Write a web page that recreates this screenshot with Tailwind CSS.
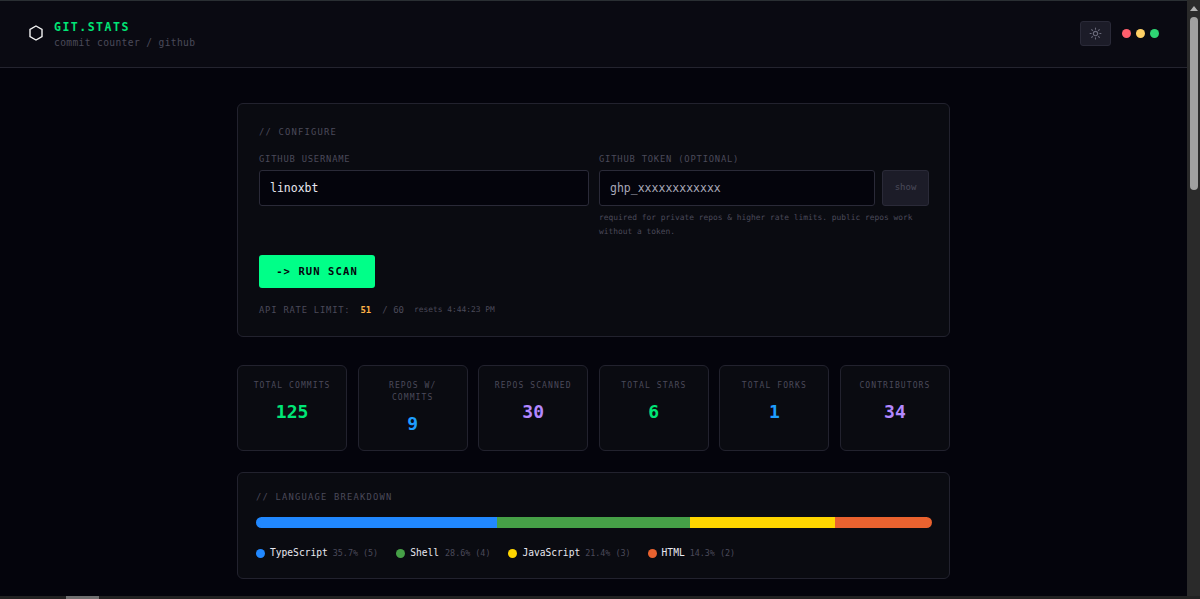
<!DOCTYPE html>
<html lang="en">
<head>
    <meta charset="UTF-8">
    <meta name="viewport" content="width=device-width, initial-scale=1.0">
    <title>git.stats</title>
    <script src="https://cdn.jsdelivr.net/npm/@tailwindcss/browser@4"></script>
</head>
<body class="h-[599px] overflow-hidden bg-[#04040c] font-['DejaVu_Sans_Mono',monospace] text-[#e6e6f0]">
<div class="flex h-[599px] flex-col overflow-hidden">
    <div class="flex min-h-0 flex-1">
        <div class="min-w-0 flex-1 overflow-hidden border-t border-[#2a2f33]">
            <header class="flex h-[66px] items-center justify-between border-b border-[#24242f] bg-[#0a0a12] pl-[29px] pr-[28px] box-content">
                <div class="flex items-center gap-[11px]">
                    <svg class="mt-[-2px] h-[16px] w-[14px]" viewBox="0 0 14 16" fill="none" stroke="#f2f2f2" stroke-width="1.4"><path d="M7 1 L13 4.5 V11.5 L7 15 L1 11.5 V4.5 Z"/></svg>
                    <div class="mt-[-1px]">
                        <div class="text-[11.5px] leading-[16px] font-bold tracking-[1.5px] text-[#00e676]">GIT.STATS</div>
                        <div class="mt-[1px] text-[9.6px] leading-[13px] tracking-[0.37px] text-[#4a4a5a]">commit counter / github</div>
                    </div>
                </div>
                <div class="mt-[-1px] flex items-center gap-[11px]">
                    <button class="flex h-[25px] w-[31px] items-center justify-center rounded-[3px] border border-[#2a2a38] bg-[#1c1c28]">
                        <svg class="h-[13px] w-[13px]" viewBox="0 0 24 24" fill="none" stroke="#6a6a7a" stroke-width="2" stroke-linecap="round"><circle cx="12" cy="12" r="4"/><path d="M12 2v2M12 20v2M4.93 4.93l1.41 1.41M17.66 17.66l1.41 1.41M2 12h2M20 12h2M6.34 17.66l-1.41 1.41M19.07 4.93l-1.41 1.41"/></svg>
                    </button>
                    <div class="flex items-center gap-[5px]">
                        <span class="h-[9px] w-[9px] rounded-full bg-[#ff5f6d]"></span>
                        <span class="h-[9px] w-[9px] rounded-full bg-[#ffd166]"></span>
                        <span class="h-[9px] w-[9px] rounded-full bg-[#2ed573]"></span>
                    </div>
                </div>
            </header>

            <main class="mx-auto w-[713px] pt-[35px]">
                <section class="h-[234px] rounded-[6px] border border-[#22222e] bg-[#0a0b11] px-[21px] pt-[22px]">
                    <h2 class="text-[8.8px] leading-[12px] tracking-[1.2px] text-[#4a4a5a]">// CONFIGURE</h2>
                    <div class="mt-[15px] flex gap-[10px]">
                        <div class="w-[330px] shrink-0">
                            <label class="block text-[8.8px] leading-[12px] tracking-[0.8px] text-[#4a4a5a]">GITHUB USERNAME</label>
                            <div class="mt-[5px] flex h-[36px] items-center rounded-[3px] border border-[#2a2a38] bg-[#04040c] px-[10px] pt-[2px] text-[11.5px] font-medium text-[#e8e8f0]">linoxbt</div>
                        </div>
                        <div class="w-[330px] shrink-0">
                            <label class="block text-[8.8px] leading-[12px] tracking-[0.8px] text-[#4a4a5a]">GITHUB TOKEN (OPTIONAL)</label>
                            <div class="mt-[5px] flex gap-[7px]">
                                <div class="flex h-[36px] w-[276px] items-center rounded-[3px] border border-[#2a2a38] bg-[#04040c] px-[10px] pt-[2px] text-[11.5px] text-[#a8a8b8]">ghp_xxxxxxxxxxxx</div>
                                <button class="h-[36px] w-[47px] rounded-[3px] border border-[#2a2a38] bg-[#1c1c28] text-[9px] text-[#4a4a5a]">show</button>
                            </div>
                            <p class="mt-[5px] text-[7.9px] leading-[13.5px] text-[#4a4a5a]">required for private repos &amp; higher rate limits. public repos work without a token.</p>
                        </div>
                    </div>
                    <button class="mt-[17px] block h-[33px] w-[116px] rounded-[3px] bg-[#00ff88] text-[10.5px] font-bold tracking-[1.1px] text-[#04040c]">-&gt; RUN SCAN</button>
                    <div class="mt-[16px] flex items-center text-[8.8px] leading-[12px] tracking-[0.8px] text-[#4a4a5a]">
                        <span>API RATE LIMIT:</span>
                        <span class="ml-[10px] text-[9px] font-bold tracking-normal text-[#ffb347]">51</span>
                        <span class="ml-[11px] text-[9px] tracking-normal">/ 60</span>
                        <span class="ml-[10px] text-[7.9px] tracking-normal">resets 4:44:23 PM</span>
                    </div>
                </section>

                <section class="mt-[28px] grid grid-cols-6 gap-[10.4px]">
                    <div class="h-[86px] rounded-[6px] border border-[#22222e] bg-[#0a0b11] px-[12px] pt-[14px] text-center">
                        <div class="text-[8px] leading-[12px] tracking-[1.1px] text-[#4a4a5a]">TOTAL COMMITS</div>
                        <div class="mt-[7px] text-[18px] leading-[26px] font-bold text-[#00e676]">125</div>
                    </div>
                    <div class="h-[86px] rounded-[6px] border border-[#22222e] bg-[#0a0b11] px-[12px] pt-[14px] text-center">
                        <div class="text-[8px] leading-[12px] tracking-[1.1px] text-[#4a4a5a]">REPOS W/ COMMITS</div>
                        <div class="mt-[7px] text-[18px] leading-[26px] font-bold text-[#1e9eff]">9</div>
                    </div>
                    <div class="h-[86px] rounded-[6px] border border-[#22222e] bg-[#0a0b11] px-[12px] pt-[14px] text-center">
                        <div class="text-[8px] leading-[12px] tracking-[1.1px] text-[#4a4a5a] whitespace-nowrap">REPOS SCANNED</div>
                        <div class="mt-[7px] text-[18px] leading-[26px] font-bold text-[#b388ff]">30</div>
                    </div>
                    <div class="h-[86px] rounded-[6px] border border-[#22222e] bg-[#0a0b11] px-[12px] pt-[14px] text-center">
                        <div class="text-[8px] leading-[12px] tracking-[1.1px] text-[#4a4a5a]">TOTAL STARS</div>
                        <div class="mt-[7px] text-[18px] leading-[26px] font-bold text-[#00e676]">6</div>
                    </div>
                    <div class="h-[86px] rounded-[6px] border border-[#22222e] bg-[#0a0b11] px-[12px] pt-[14px] text-center">
                        <div class="text-[8px] leading-[12px] tracking-[1.1px] text-[#4a4a5a]">TOTAL FORKS</div>
                        <div class="mt-[7px] text-[18px] leading-[26px] font-bold text-[#1e9eff]">1</div>
                    </div>
                    <div class="h-[86px] rounded-[6px] border border-[#22222e] bg-[#0a0b11] px-[12px] pt-[14px] text-center">
                        <div class="text-[8px] leading-[12px] tracking-[1.1px] text-[#4a4a5a]">CONTRIBUTORS</div>
                        <div class="mt-[7px] text-[18px] leading-[26px] font-bold text-[#b388ff]">34</div>
                    </div>
                </section>

                <section class="mt-[21px] h-[107px] rounded-[6px] border border-[#22222e] bg-[#0a0b11] pl-[18px] pr-[17px] pt-[18px]">
                    <h2 class="text-[8.8px] leading-[12px] tracking-[1.2px] text-[#4a4a5a]">// LANGUAGE BREAKDOWN</h2>
                    <div class="mt-[14px] flex h-[11px] overflow-hidden rounded-full">
                        <div class="w-[241px] bg-[#2188ff]"></div>
                        <div class="w-[193px] bg-[#46a047]"></div>
                        <div class="w-[145px] bg-[#ffd600]"></div>
                        <div class="flex-1 bg-[#e9622f]"></div>
                    </div>
                    <div class="mt-[19px] flex items-center text-[9.6px] leading-[12px]">
                        <span class="h-[9px] w-[9px] rounded-full bg-[#2188ff]"></span>
                        <span class="ml-[5px] text-[#e8e8f0]">TypeScript</span>
                        <span class="ml-[5px] text-[8.4px] text-[#4a4a5a]">35.7% (5)</span>
                        <span class="ml-[18px] h-[9px] w-[9px] rounded-full bg-[#46a047]"></span>
                        <span class="ml-[5px] text-[#e8e8f0]">Shell</span>
                        <span class="ml-[6px] text-[8.4px] text-[#4a4a5a]">28.6% (4)</span>
                        <span class="ml-[18px] h-[9px] w-[9px] rounded-full bg-[#ffd600]"></span>
                        <span class="ml-[5px] text-[#e8e8f0]">JavaScript</span>
                        <span class="ml-[5px] text-[8.4px] text-[#4a4a5a]">21.4% (3)</span>
                        <span class="ml-[17px] h-[9px] w-[9px] rounded-full bg-[#e9622f]"></span>
                        <span class="ml-[5px] text-[#e8e8f0]">HTML</span>
                        <span class="ml-[5px] text-[8.4px] text-[#4a4a5a]">14.3% (2)</span>
                    </div>
                </section>
            </main>
        </div>

        <!-- window scrollbar from the capture -->
        <div class="flex w-[13px] flex-col items-center bg-[#2a2a2a] pt-[6px]">
            <div class="h-0 w-0 border-x-[4px] border-b-[5px] border-x-transparent border-b-[#b0b0b0]"></div>
            <div class="mt-[6px] h-[173px] w-[8px] rounded-full bg-[#a0a0a0]"></div>
        </div>
    </div>
    <div class="h-[3px] bg-[#222222] pl-[66px]">
        <div class="h-[3px] w-[33px] bg-[#707070]"></div>
    </div>
</div>
</body>
</html>
